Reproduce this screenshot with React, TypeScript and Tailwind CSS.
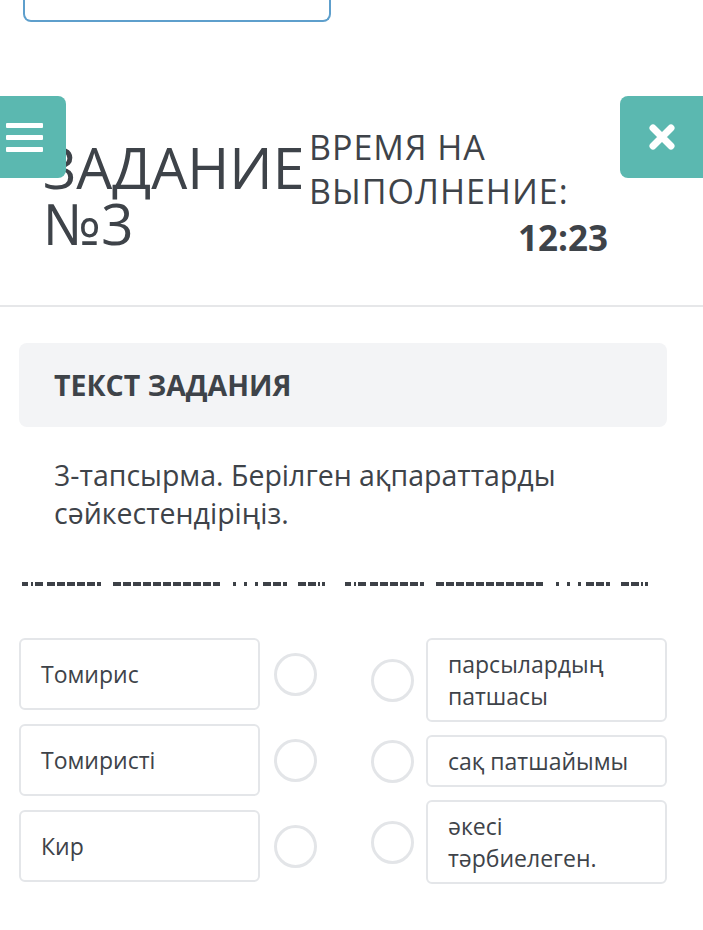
import React from 'react'

const leftItems = ['Томирис', 'Томиристі', 'Кир']
const rightItems = ['парсылардың патшасы', 'сақ патшайымы', 'әкесі тәрбиелеген.']

// runs of the dashed separator: [x, width, dashed]
const dashRuns: [number, number, boolean][] = [
  [0, 6, false],
  [9, 2, false],
  [13, 8, false],
  [25, 54, true],
  [91, 107, true],
  [211, 3, false],
  [222, 3, false],
  [233, 3, false],
  [241, 24, true],
  [276, 18, true],
  [296, 2, false],
  [300, 3, false],
]

function DashedLine() {
  return (
    <svg width="641" height="6" viewBox="0 0 641 6" className="block">
      {[0, 323].map((offset) =>
        dashRuns.map(([x, w, dashed], i) => (
          <line
            key={`${offset}-${i}`}
            x1={offset + x}
            x2={offset + x + w}
            y1={3}
            y2={3}
            stroke="#3d4147"
            strokeWidth={4}
            strokeDasharray={dashed ? '8 2' : undefined}
          />
        ))
      )}
    </svg>
  )
}

function Circle() {
  return <div className="w-[43px] h-[43px] rounded-full border-[3px] border-[#e3e5e8] flex-shrink-0" />
}

export default function App() {
  return (
    <div className="relative min-h-[930px] bg-white font-['Open_Sans',sans-serif] text-[#3e4349] overflow-hidden">
      {/* top input stub */}
      <div className="ml-[23px] w-[308px] h-[22px] border-2 border-t-0 border-[#5e9fcc] rounded-b-[8px]" />

      {/* menu + close */}
      <button className="absolute left-0 top-[96px] w-[66px] h-[82px] bg-[#5bb8b0] rounded-r-[8px] flex flex-col justify-center gap-[7px] pl-[6px]">
        <span className="block w-[37px] h-[5px] bg-white rounded-[1px]" />
        <span className="block w-[37px] h-[5px] bg-white rounded-[1px]" />
        <span className="block w-[37px] h-[5px] bg-white rounded-[1px]" />
      </button>
      <button className="absolute right-0 top-[96px] w-[83px] h-[82px] bg-[#5bb8b0] rounded-l-[8px] flex items-center justify-center">
        <svg width="28" height="28" viewBox="0 0 28 28">
          <path d="M5 5L23 23M23 5L5 23" stroke="white" strokeWidth={7} strokeLinecap="round" />
        </svg>
      </button>

      {/* Header */}
      <div className="flex items-start pl-[43px] pr-[95px] mt-[103px]">
        <h1 className="w-[266px] mt-[14px] text-[57px] leading-[56px] font-normal">ЗАДАНИЕ №3</h1>
        <div className="flex-1">
          <div className="text-[34px] leading-[44px] tracking-[1px]">ВРЕМЯ НА ВЫПОЛНЕНИЕ:</div>
          <div className="mt-[5px] text-right text-[35px] leading-[40px] font-bold">12:23</div>
        </div>
      </div>

      <div className="mt-[47px] h-[2px] bg-[#e6e7e9]" />

      {/* Task */}
      <div className="pl-[19px] pr-[36px] pt-[36px]">
        <div className="h-[84px] bg-[#f3f4f6] rounded-[8px] px-[35px] flex items-center">
          <h2 className="text-[28.5px] font-bold">ТЕКСТ ЗАДАНИЯ</h2>
        </div>

        <p className="mt-[29px] px-[35px] text-[28.5px] leading-[38px]">
          3-тапсырма. Берілген ақпараттарды сәйкестендіріңіз.
        </p>

        <div className="mt-[49px] pl-[3px]">
          <DashedLine />
        </div>

        {/* Matching */}
        <div className="mt-[51px] flex justify-between text-[23px] leading-[32px]">
          <div className="flex flex-col gap-[14px]">
            {leftItems.map((item) => (
              <div key={item} className="flex items-center gap-[14px]">
                <div className="w-[241px] min-h-[72px] border-2 border-[#e4e6e9] rounded-[6px] px-[20px] flex items-center">
                  {item}
                </div>
                <Circle />
              </div>
            ))}
          </div>
          <div className="flex flex-col gap-[13px]">
            {rightItems.map((item) => (
              <div key={item} className="flex items-center gap-[12px]">
                <Circle />
                <div className="w-[241px] border-2 border-[#e4e6e9] rounded-[6px] px-[20px] py-[8px]">
                  {item}
                </div>
              </div>
            ))}
          </div>
        </div>
      </div>
    </div>
  )
}
